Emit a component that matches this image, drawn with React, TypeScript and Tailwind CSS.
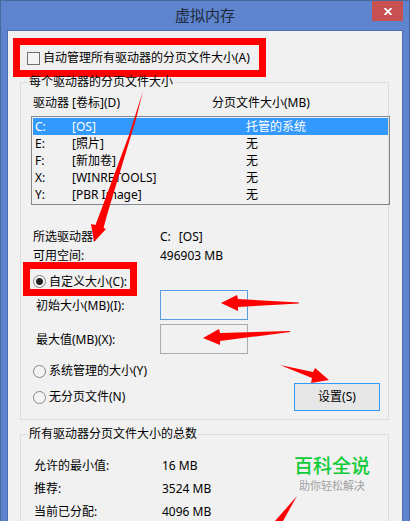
import { useState } from 'react';

type Drive = {
    letter: string;
    label: string;
    paging: string;
};

const drives: Drive[] = [
    { letter: 'C:', label: '[OS]', paging: '托管的系统' },
    { letter: 'E:', label: '[照片]', paging: '无' },
    { letter: 'F:', label: '[新加卷]', paging: '无' },
    { letter: 'X:', label: '[WINRETOOLS]', paging: '无' },
    { letter: 'Y:', label: '[PBR Image]', paging: '无' },
];

const totals = [
    { name: '允许的最小值:', value: '16 MB' },
    { name: '推荐:', value: '3524 MB' },
    { name: '当前已分配:', value: '4096 MB' },
];

const radioClass =
    'appearance-none size-[13px] shrink-0 rounded-full border border-[#858585] bg-[#f4f4f4] checked:bg-[radial-gradient(circle,#222_0_3px,#f4f4f4_4px)]';

const Arrows = () => (
    <svg className="absolute -left-px -top-px pointer-events-none" width="410" height="521" viewBox="0 0 410 521" fill="#ff0000" aria-hidden="true">
        <path d="M143 91 L136 119 L107 215 L103.5 228 L106 229 L94 242 L91 224 L95.5 225 L100 213 L129 135 Z" />
        <path d="M221 303 L237 295 L238 299 L299 302.5 L299 303.5 L238 307 L238 311 Z" />
        <path d="M203 338 L219 329 L220 333 L290 331 V332 L220 341 L220 345 Z" />
        <path d="M280 365 L313 372 L315 368 L329 380 L311 383 L312 378 Z" />
        <path d="M297 496 L283 521 L275 521 Z" />
    </svg>
);

const App = () => {
    const [selected, setSelected] = useState('C:');
    const [mode, setMode] = useState('custom');

    return (
        <div className="relative h-screen overflow-hidden flex flex-col border border-b-0 border-[#48689f] bg-[#5d84cd] px-[6px] text-xs leading-4 text-black font-['Noto_Sans','Noto_Sans_CJK_SC',sans-serif]">
            <header className="relative h-[29px] shrink-0 flex items-start justify-center pt-1">
                <h1 className="text-[15px] leading-5 text-[#1e2a3c]">虚拟内存</h1>
                <button type="button" aria-label="关闭" className="absolute right-0 top-0 h-5 w-[31px] flex items-center justify-center bg-[#c75050]">
                    <svg width="8" height="7" viewBox="0 0 8 7" stroke="#fff" strokeWidth="1.8" fill="none">
                        <path d="M0.5 0 L7.5 7 M7.5 0 L0.5 7" />
                    </svg>
                </button>
            </header>

            <main className="flex-1 border border-b-0 border-[#4a6db3] bg-[#f1f1f1] pl-[5px] pr-[13px] pt-[7px]">
                <label className="w-[253px] h-[39px] flex items-center gap-[3px] border-[7px] border-[#ff0000] pl-[7px] pt-px whitespace-nowrap">
                    <input type="checkbox" className="appearance-none size-[13px] shrink-0 border border-[#707070] bg-[#f4f4f4] checked:bg-[#707070]" />
                    自动管理所有驱动器的分页文件大小(A)
                </label>

                <fieldset className="ml-[7px] -mt-[3px] min-w-0 border border-[#dcdcdc] pb-2">
                    <legend className="ml-[7px] px-[1px]">每个驱动器的分页文件大小</legend>

                    <table className="block ml-[10px] -mr-[2px]">
                        <thead className="block">
                            <tr className="grid grid-cols-[179px_1fr] items-center h-[26px] pl-[2px]">
                                <th className="text-left font-normal">驱动器 [卷标](D)</th>
                                <th className="text-left font-normal">分页文件大小(MB)</th>
                            </tr>
                        </thead>
                        <tbody className="block border border-[#828790] p-px">
                            {drives.map(drive => (
                                <tr
                                    key={drive.letter}
                                    onClick={() => setSelected(drive.letter)}
                                    className={`grid grid-cols-[37px_174px_1fr] items-center h-[17px] pl-[2px] ${selected === drive.letter ? 'bg-[#3399ff] text-white' : ''}`}
                                >
                                    <td>{drive.letter}</td>
                                    <td>{drive.label}</td>
                                    <td>{drive.paging}</td>
                                </tr>
                            ))}
                        </tbody>
                    </table>

                    <dl className="mt-[22px] ml-3 grid grid-cols-[127px_1fr] leading-[19px]">
                        <dt>所选驱动器:</dt>
                        <dd className="flex gap-2">
                            <span>C:</span>
                            <span>[OS]</span>
                        </dd>
                        <dt>可用空间:</dt>
                        <dd>496903 MB</dd>
                    </dl>

                    <label className="ml-[2px] -mt-[3px] w-[114px] h-[34px] flex items-center gap-[3px] border-[7px] border-[#ff0000] pl-[3px] pt-[5px] whitespace-nowrap">
                        <input type="radio" name="mode" className={radioClass} checked={mode === 'custom'} onChange={() => setMode('custom')} />
                        自定义大小(C):
                    </label>

                    <div className="ml-[15px] -mt-[6px] grid grid-cols-[124px_88px] gap-y-1 items-center">
                        <label htmlFor="initial-size" className="pt-[2px]">初始大小(MB)(I):</label>
                        <input id="initial-size" type="text" className="h-[30px] w-full border border-[#569de5] px-1 outline-none" />
                        <label htmlFor="max-size" className="pt-[2px]">最大值(MB)(X):</label>
                        <input id="max-size" type="text" className="h-[30px] w-full border border-[#ababab] px-1 outline-none" />
                    </div>

                    <label className="ml-3 mt-[7px] h-5 flex items-center gap-[3px]">
                        <input type="radio" name="mode" className={radioClass} checked={mode === 'system'} onChange={() => setMode('system')} />
                        系统管理的大小(Y)
                    </label>
                    <div className="ml-3 mr-2 mt-[2px] flex items-center justify-between">
                        <label className="flex items-center gap-[3px]">
                            <input type="radio" name="mode" className={radioClass} checked={mode === 'none'} onChange={() => setMode('none')} />
                            无分页文件(N)
                        </label>
                        <button type="button" className="h-7 w-[86px] border border-[#3399ff] bg-[#e7e7e7]">设置(S)</button>
                    </div>
                </fieldset>

                <fieldset className="relative ml-[7px] mt-[6px] min-w-0 border border-[#dcdcdc] pb-2">
                    <legend className="ml-[7px] px-[1px]">所有驱动器分页文件大小的总数</legend>
                    <dl className="mt-3 ml-[13px] grid grid-cols-[128px_1fr] leading-[23px]">
                        {totals.map(total => (
                            <div key={total.name} className="contents">
                                <dt>{total.name}</dt>
                                <dd>{total.value}</dd>
                            </div>
                        ))}
                    </dl>
                    <div className="absolute right-[18px] top-3 text-center whitespace-nowrap">
                        <p className="text-[19px] leading-6 font-medium text-[#0fcb36]">百科全说</p>
                        <p className="text-[11px] leading-4 text-[#a3a3a3]">助你轻松解决</p>
                    </div>
                </fieldset>
            </main>

            <Arrows />
        </div>
    );
};

export default App;
